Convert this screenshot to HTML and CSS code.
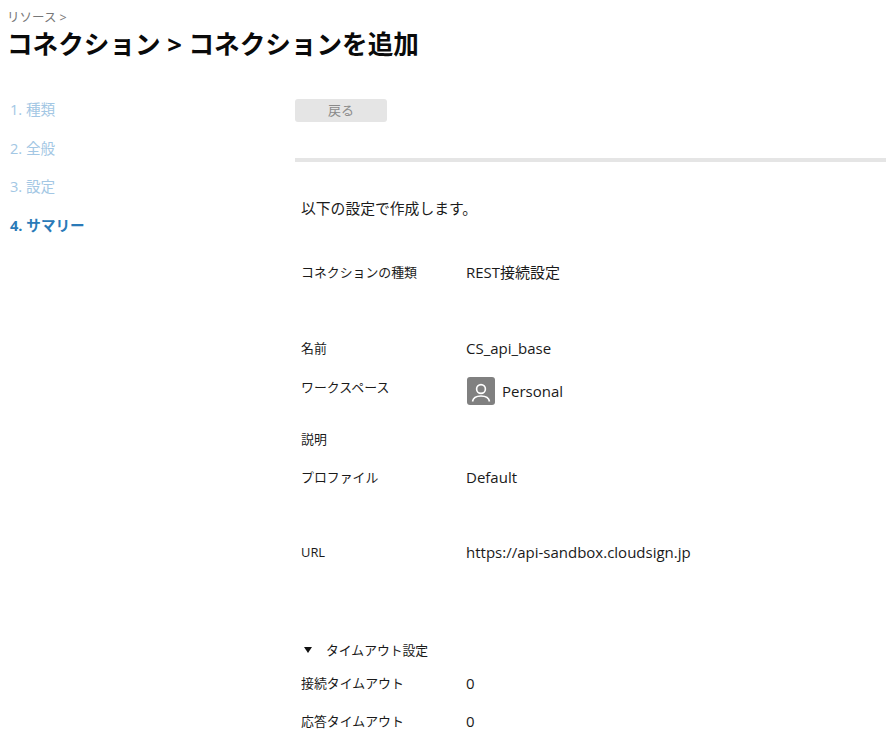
FILE: index.html
```html
<!DOCTYPE html>
<html lang="ja">
<head>
<meta charset="utf-8">
<title>コネクションを追加</title>
<link rel="stylesheet" href="styles.css">
</head>
<body>
<header class="header">
  <div class="crumb">リソース &gt;</div>
  <h1 class="title">コネクション &gt; コネクションを追加</h1>
</header>
<div class="layout">
  <nav class="steps">
    <div class="step">1. 種類</div>
    <div class="step">2. 全般</div>
    <div class="step">3. 設定</div>
    <div class="step current">4. サマリー</div>
  </nav>
  <main class="main">
    <div class="toolbar"><button class="back" disabled>戻る</button></div>
    <hr class="rule">
    <div class="content">
      <p class="lead">以下の設定で作成します。</p>
      <div class="row r-type"><div class="label">コネクションの種類</div><div class="value">REST接続設定</div></div>
      <div class="row r-name"><div class="label">名前</div><div class="value">CS_api_base</div></div>
      <div class="row r-ws"><div class="label">ワークスペース</div>
        <div class="value ws">
          <svg class="avatar" width="28" height="28" viewBox="0 0 28 28"><rect width="28" height="28" rx="3" fill="#808080"/><circle cx="14" cy="12" r="4.4" fill="none" stroke="#fff" stroke-width="1.6"/><path d="M5.5 24.500c.6-3.600 4-5.500 8.500-5.500s7.900 1.900 8.500 5.500" fill="none" stroke="#fff" stroke-width="1.6"/></svg>
          <span>Personal</span>
        </div>
      </div>
      <div class="row r-desc"><div class="label">説明</div><div class="value"></div></div>
      <div class="row r-prof"><div class="label">プロファイル</div><div class="value">Default</div></div>
      <div class="row r-url"><div class="label">URL</div><div class="value">https://api-sandbox.cloudsign.jp</div></div>
      <div class="section"><span class="caret"></span><span>タイムアウト設定</span></div>
      <div class="row r-conn"><div class="label">接続タイムアウト</div><div class="value">0</div></div>
      <div class="row r-resp"><div class="label">応答タイムアウト</div><div class="value">0</div></div>
    </div>
  </main>
</div>
</body>
</html>
```
FILE: styles.css
```css
* { box-sizing: border-box; }
html, body { height: 100%; overflow: hidden; }
body {
  margin: 0;
  background: #fff;
  color: #1a1a1a;
  font-family: "Open Sans", "Noto Sans CJK JP", sans-serif;
  font-size: 15px;
}
.header { padding: 10px 0 0 7px; }
.crumb { font-size: 12.5px; line-height: 16px; color: #777; }
.title { margin: 0; font-size: 25.6px; line-height: 38px; font-weight: 700; color: #0a0a0a; }
.layout { display: flex; margin-top: 34px; }
.steps { width: 295px; padding: 0 0 0 10px; flex: none; }
.step { height: 38.5px; line-height: 22px; font-size: 14.6px; color: #a3c7e4; }
.step.current { color: #2a7ab8; font-weight: 700; }
.main { flex: 1; min-width: 0; }
.toolbar { height: 23px; margin-top: 1px; }
.back {
  display: block; width: 92px; height: 23px; padding: 0; border: 0; border-radius: 3px;
  background: #e5e5e5; color: #8a8a8a; font: inherit; font-size: 13px; line-height: 23px;
}
.rule { height: 4px; margin: 36px 0 0; border: 0; background: #e5e5e5; }
.content { padding-left: 6px; }
.lead { margin: 0; padding: 35px 0 0; font-size: 14.8px; line-height: 22px; height: 97px; }
.row { display: flex; align-items: flex-start; }
.label { width: 165px; flex: none; font-size: 12.9px; line-height: 20px; }
.value { line-height: 22px; }
.r-type { margin-top: 2px; height: 76px; }
.r-type .label, .r-name .label, .r-url .label, .r-conn .label, .r-resp .label { padding-top: 1px; }
.r-prof .label { padding-top: 1px; }
.r-name { height: 40px; }
.r-ws { height: 54px; }
.ws { display: flex; align-items: center; gap: 7px; }
.avatar { flex: none; display: block; margin-left: 1px; }
.r-desc { height: 36px; margin-top: -2px; }
.r-prof { height: 75px; margin-top: 1px; }
.r-url { height: 97px; }
.section { display: flex; align-items: center; font-size: 12.8px; line-height: 20px; height: 34px; margin-left: 3px; padding-bottom: 10px; }
.caret { width: 0; height: 0; border-left: 4px solid transparent; border-right: 4px solid transparent; border-top: 6px solid #111; margin-right: 14px; }
.r-conn { height: 38px; }
.r-resp { height: 30px; }
```
